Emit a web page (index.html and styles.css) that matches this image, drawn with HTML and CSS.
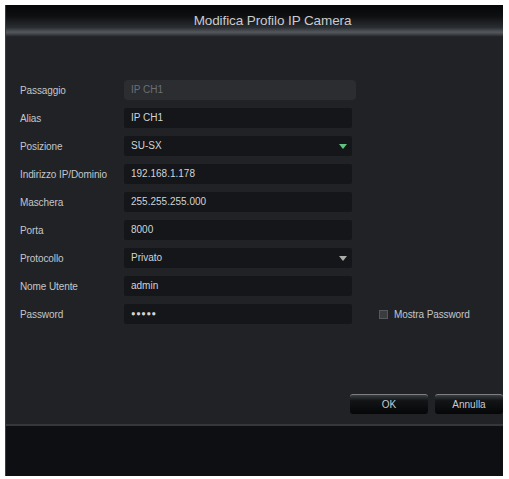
FILE: index.html
```html
<!DOCTYPE html>
<html lang="it">

<head>
    <meta charset="UTF-8">
    <meta name="viewport" content="width=device-width, initial-scale=1.0">
    <title>Modifica Profilo IP Camera</title>
    <link rel="stylesheet" href="styles.css">
</head>

<body>
    <div class="dialog">
        <div class="dialog-header">Modifica Profilo IP Camera</div>

        <div class="dialog-body">
            <div class="form">
                <div class="row">
                    <label>Passaggio</label>
                    <div class="field disabled">IP CH1</div>
                </div>
                <div class="row">
                    <label>Alias</label>
                    <div class="field">IP CH1</div>
                </div>
                <div class="row">
                    <label>Posizione</label>
                    <div class="field select">SU-SX<span class="arrow green"></span></div>
                </div>
                <div class="row">
                    <label>Indirizzo IP/Dominio</label>
                    <div class="field">192.168.1.178</div>
                </div>
                <div class="row">
                    <label>Maschera</label>
                    <div class="field">255.255.255.000</div>
                </div>
                <div class="row">
                    <label>Porta</label>
                    <div class="field">8000</div>
                </div>
                <div class="row">
                    <label>Protocollo</label>
                    <div class="field select">Privato<span class="arrow"></span></div>
                </div>
                <div class="row">
                    <label>Nome Utente</label>
                    <div class="field">admin</div>
                </div>
                <div class="row">
                    <label>Password</label>
                    <div class="field pass">&#9679;&#9679;&#9679;&#9679;&#9679;</div>
                    <div class="show-pass"><span class="checkbox"></span>Mostra Password</div>
                </div>
            </div>

            <div class="buttons">
                <button class="btn">OK</button>
                <button class="btn">Annulla</button>
            </div>
        </div>

        <div class="dialog-footer"></div>
    </div>
</body>

</html>
```

FILE: styles.css
```css
* {
    margin: 0;
    padding: 0;
    box-sizing: border-box;
    font-family: 'Liberation Sans', Arial, sans-serif;
}

body {
    background: #fff;
    width: 509px;
    height: 479px;
}

.dialog {
    margin: 5px 6px 3px 5px;
    height: 471px;
    background: #202226;
    display: flex;
    flex-direction: column;
    border-left: 1px solid #3a3c40;
}

.dialog-header {
    height: 32px;
    background: linear-gradient(#050607 0%, #0d0f11 35%, #2a2d31 70%, #55585d 85%, #3d4044 92%, #1d1f23 100%);
    color: #c9cbce;
    font-size: 13.5px;
    text-align: center;
    line-height: 32px;
    padding-left: 36px;
    letter-spacing: -0.1px;
}

.dialog-body {
    flex: 1;
    display: flex;
    flex-direction: column;
    padding: 43px 0 10px 14px;
    border-bottom: 2px solid #34373b;
}

.form {
    display: flex;
    flex-direction: column;
    gap: 8px;
}

.row {
    display: flex;
    align-items: center;
    height: 20px;
}

.row label {
    width: 104px;
    color: #c4c6c9;
    font-size: 10px;
    letter-spacing: -0.1px;
}

.field {
    width: 228px;
    height: 20px;
    line-height: 20px;
    background: #141619;
    color: #d2d4d6;
    font-size: 10px;
    padding-left: 7px;
    border-radius: 2px;
    position: relative;
}

.field.disabled {
    background: #2b2d31;
    color: #6c6f73;
    border-radius: 4px;
    width: 232px;
}

.field.pass {
    font-size: 7.5px;
    letter-spacing: 0.6px;
}

.arrow {
    position: absolute;
    right: 5px;
    top: 8px;
    width: 0;
    height: 0;
    border-left: 4px solid transparent;
    border-right: 4px solid transparent;
    border-top: 5px solid #a9aeab;
}

.arrow.green {
    border-top-color: #5fc47e;
}

.show-pass {
    display: flex;
    align-items: center;
    margin-left: 27px;
    color: #c4c6c9;
    font-size: 10px;
    letter-spacing: -0.1px;
}

.checkbox {
    width: 9px;
    height: 9px;
    background: #3a3c40;
    border: 1px solid #55585c;
    margin-right: 6px;
}

.buttons {
    margin-top: auto;
    display: flex;
    justify-content: flex-end;
    gap: 7px;
    margin-right: 0;
}

.btn {
    width: 78px;
    height: 20px;
    border: none;
    border-top: 1px solid #7b7e82;
    border-radius: 3px;
    background: linear-gradient(#3a3d41 0%, #121416 30%, #050607 100%);
    color: #c9cbce;
    font-size: 10px;
}

.btn:last-child {
    width: 68px;
}

.dialog-footer {
    height: 50px;
    background: #0d0f12;
}
```
